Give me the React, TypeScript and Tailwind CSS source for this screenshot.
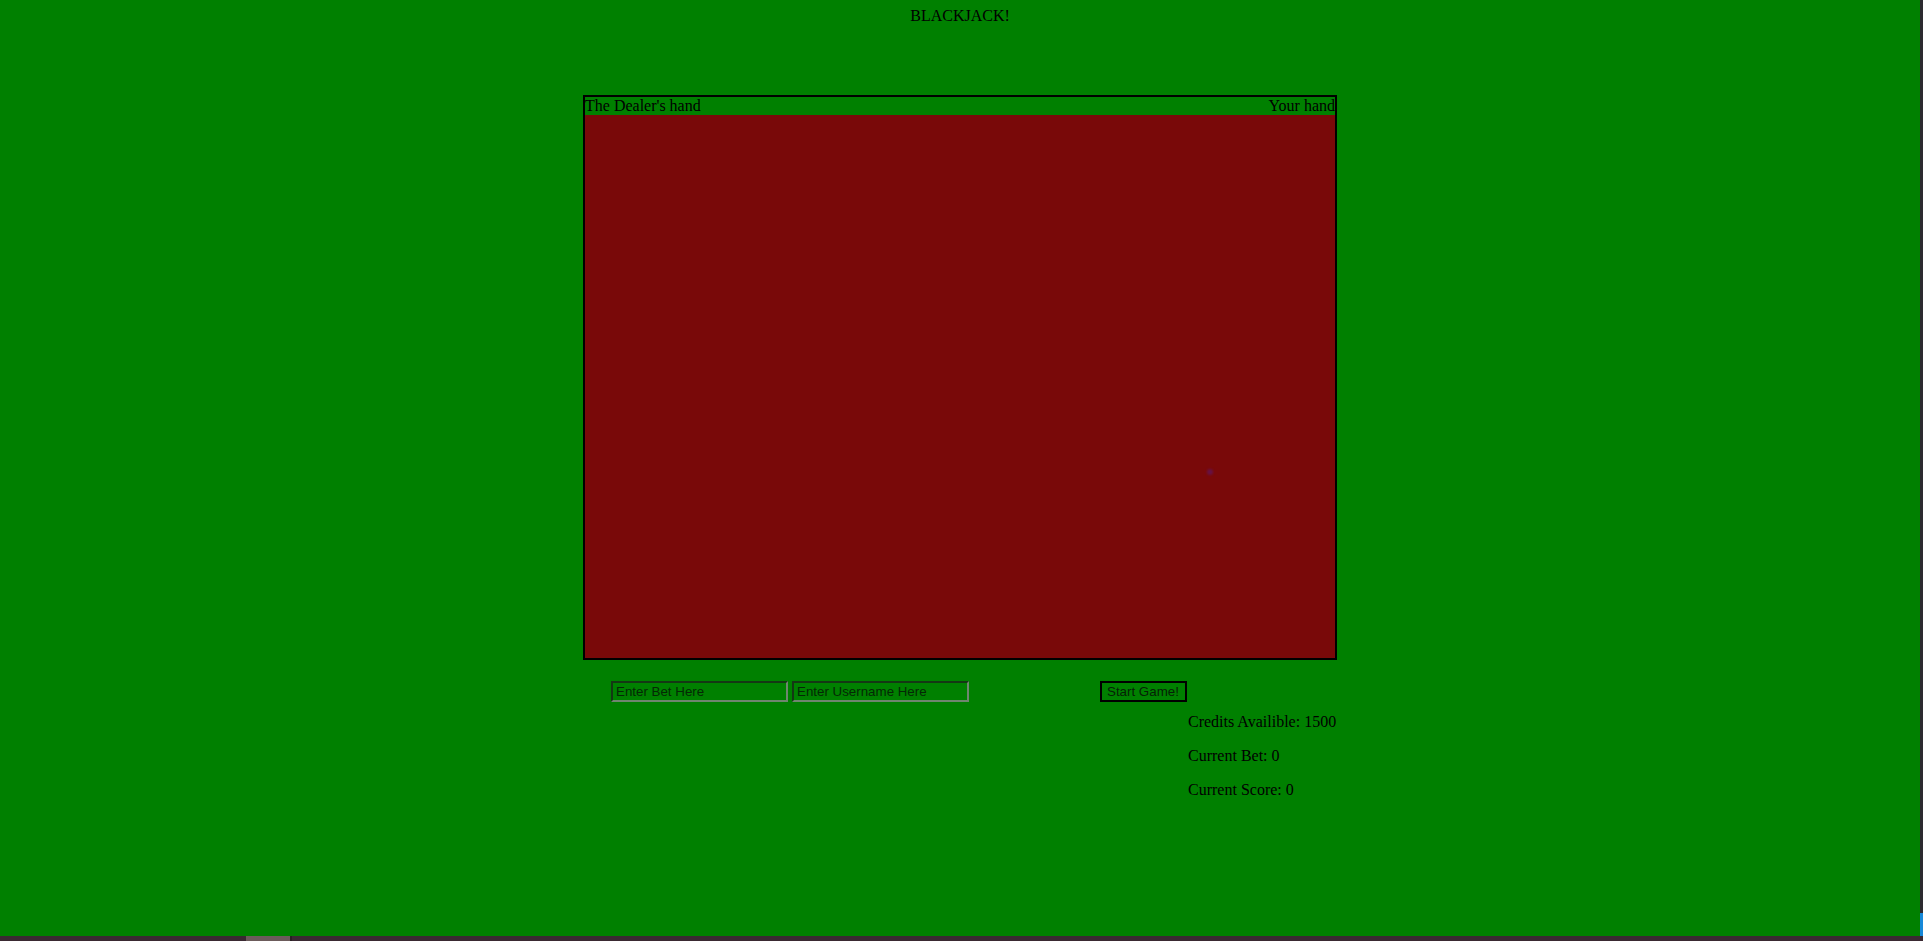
import React from 'react';

const serif = { fontFamily: '"Liberation Serif", "Times New Roman", serif' };
const sans = { fontFamily: '"Liberation Sans", Arial, sans-serif' };

export default function App() {
  return (
    <div className="h-[941px] w-full flex flex-col overflow-hidden bg-[#008000] text-black text-[16px] leading-[18px]" style={serif}>
      <div className="flex flex-1 min-h-0">
        {/* Tapete verde principal */}
        <div className="flex-1 flex flex-col items-center">
          <div className="pt-[7px] text-center">BLACKJACK!</div>

          {/* Mesa */}
          <div className="mt-[70px] w-[754px] border-2 border-black">
            <div className="h-[18px] flex justify-between">
              <span>The Dealer's hand</span>
              <span>Your hand</span>
            </div>
            <div className="relative h-[543px] bg-[#790909]">
              <div className="absolute left-[622px] top-[354px] w-[6px] h-[6px] rounded-full bg-[#5b1870] opacity-60 blur-[1px]"></div>
            </div>
          </div>

          {/* Controles */}
          <div className="w-[754px] mt-[21px]">
            <div className="flex items-start">
              <div className="w-[517px] pl-[28px] flex gap-[4px]" style={sans}>
                <input
                  placeholder="Enter Bet Here"
                  className="w-[177px] h-[21px] px-[3px] text-[13.33px] bg-transparent outline-none border-2 border-t-[#143814] border-l-[#143814] border-b-[#6f866f] border-r-[#6f866f] placeholder:text-[#052805] placeholder:opacity-100"
                />
                <input
                  placeholder="Enter Username Here"
                  className="w-[177px] h-[21px] px-[3px] text-[13.33px] bg-transparent outline-none border-2 border-t-[#143814] border-l-[#143814] border-b-[#6f866f] border-r-[#6f866f] placeholder:text-[#052805] placeholder:opacity-100"
                />
              </div>
              <button
                className="w-[87px] h-[21px] border-2 border-black px-[5px] text-[13.33px] leading-[15px] text-[#062006] text-left whitespace-nowrap"
                style={sans}
              >
                Start Game!
              </button>
            </div>

            <div className="ml-[605px] mt-[11px] flex flex-col gap-[16px]">
              <p>Credits Availible: 1500</p>
              <p>Current Bet: 0</p>
              <p>Current Score: 0</p>
            </div>
          </div>
        </div>

        {/* Barra lateral */}
        <div className="w-[3px] bg-[#2c2a30] flex flex-col justify-end">
          <div className="h-[23px] bg-[#1788d8]"></div>
        </div>
      </div>

      {/* Barra de rolagem inferior */}
      <div className="h-[5px] bg-[#3a2932] flex">
        <div className="ml-[246px] w-[44px] bg-[#6c5b5b]"></div>
        <div className="w-[2px] bg-[#2a2024]"></div>
      </div>
    </div>
  );
}
